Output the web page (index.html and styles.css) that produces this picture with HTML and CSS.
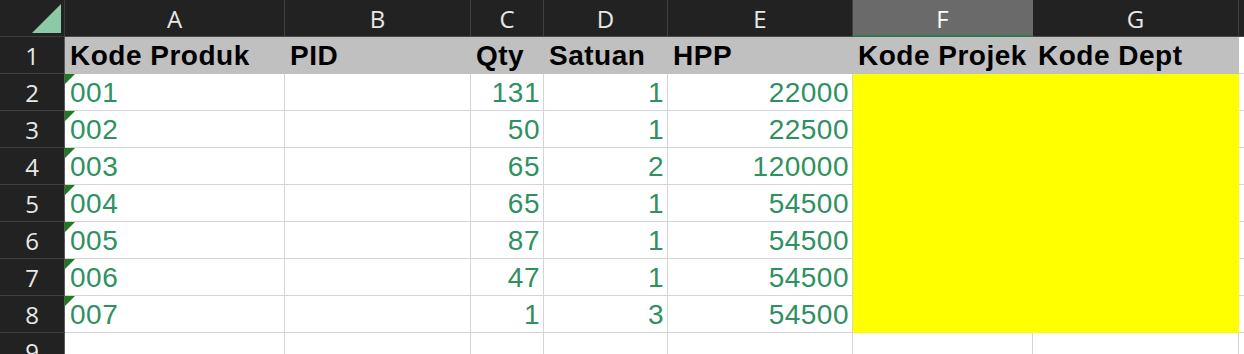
FILE: index.html
```html
<!DOCTYPE html>
<html>
<head>
<meta charset="utf-8">
<link rel="stylesheet" href="styles.css">
</head>
<body>
<div class="sheet">
  <div class="corner"><svg width="64" height="36" viewBox="0 0 64 36"><polygon points="32,33 61,33 61,4" fill="#8cc9a7"/></svg></div>
  <div class="colhead">A</div>
  <div class="colhead">B</div>
  <div class="colhead">C</div>
  <div class="colhead">D</div>
  <div class="colhead">E</div>
  <div class="colhead sel">F</div>
  <div class="colhead">G</div>
  <div class="colhead last"></div>

  <div class="rowhead">1</div>
  <div class="cell title">Kode Produk</div>
  <div class="cell title">PID</div>
  <div class="cell title">Qty</div>
  <div class="cell title">Satuan</div>
  <div class="cell title">HPP</div>
  <div class="cell title">Kode Projek</div>
  <div class="cell title">Kode Dept</div>
  <div class="cell"></div>

  <div class="rowhead">2</div>
  <div class="cell txt">001</div><div class="cell"></div><div class="cell num">131</div><div class="cell num">1</div><div class="cell num">22000</div><div class="cell yel"></div><div class="cell yel"></div><div class="cell"></div>
  <div class="rowhead">3</div>
  <div class="cell txt">002</div><div class="cell"></div><div class="cell num">50</div><div class="cell num">1</div><div class="cell num">22500</div><div class="cell yel"></div><div class="cell yel"></div><div class="cell"></div>
  <div class="rowhead">4</div>
  <div class="cell txt">003</div><div class="cell"></div><div class="cell num">65</div><div class="cell num">2</div><div class="cell num">120000</div><div class="cell yel"></div><div class="cell yel"></div><div class="cell"></div>
  <div class="rowhead">5</div>
  <div class="cell txt">004</div><div class="cell"></div><div class="cell num">65</div><div class="cell num">1</div><div class="cell num">54500</div><div class="cell yel"></div><div class="cell yel"></div><div class="cell"></div>
  <div class="rowhead">6</div>
  <div class="cell txt">005</div><div class="cell"></div><div class="cell num">87</div><div class="cell num">1</div><div class="cell num">54500</div><div class="cell yel"></div><div class="cell yel"></div><div class="cell"></div>
  <div class="rowhead">7</div>
  <div class="cell txt">006</div><div class="cell"></div><div class="cell num">47</div><div class="cell num">1</div><div class="cell num">54500</div><div class="cell yel"></div><div class="cell yel"></div><div class="cell"></div>
  <div class="rowhead">8</div>
  <div class="cell txt">007</div><div class="cell"></div><div class="cell num">1</div><div class="cell num">3</div><div class="cell num">54500</div><div class="cell yel"></div><div class="cell yel"></div><div class="cell"></div>
  <div class="rowhead">9</div>
  <div class="cell"></div><div class="cell"></div><div class="cell"></div><div class="cell"></div><div class="cell"></div><div class="cell"></div><div class="cell"></div><div class="cell"></div>
</div>
</body>
</html>
```

FILE: styles.css
```css
html, body {
  margin: 0;
  padding: 0;
  background: #ffffff;
  overflow: hidden;
}

.sheet {
  display: grid;
  grid-template-columns: 65px 220px 186px 73px 124px 185px 180px 206px 1fr;
  grid-template-rows: 37px repeat(9, 37px);
  width: 1244px;
  height: 354px;
  overflow: hidden;
}

.sheet > div {
  box-sizing: border-box;
  min-width: 0;
  overflow: hidden;
  white-space: nowrap;
}

.corner {
  background: #222222;
  border-right: 1px solid #3c3c3c;
  border-bottom: 1px solid #3c3c3c;
}
.corner svg { display: block; }

.colhead {
  background: #222222;
  color: #e8e8e8;
  font-family: "Open Sans", "Noto Sans", sans-serif;
  font-size: 24px;
  line-height: 38px;
  text-align: center;
  border-right: 1px solid #3f3f3f;
  border-bottom: 1px solid #4a4a4a;
}
.colhead.sel {
  background: #6a6a6a;
  color: #ffffff;
  border-bottom: 2px solid #2f7a52;
  border-right-color: #6a6a6a;
}
.colhead.last { border-right: none; }

.rowhead {
  background: #222222;
  color: #e8e8e8;
  font-family: "Open Sans", "Noto Sans", sans-serif;
  font-size: 24px;
  line-height: 38px;
  text-align: center;
  border-right: 1px solid #5a5a5a;
  border-bottom: 1px solid #3f3f3f;
}

.cell {
  position: relative;
  background: #ffffff;
  border-right: 1px solid #d4d4d4;
  border-bottom: 1px solid #d4d4d4;
  font-family: "Liberation Sans", Arial, sans-serif;
  font-size: 28px;
  line-height: 37px;
  letter-spacing: 0.5px;
  padding: 0 4px 0 5px;
  color: #2f9161;
}

.title {
  background: #c0c0c0;
  border-color: #c0c0c0;
  color: #000000;
  font-weight: bold;
  padding-left: 5px;
}

.num { text-align: right; padding-right: 3px; }

.txt::before {
  content: "";
  position: absolute;
  left: 0;
  top: 0;
  border-top: 10px solid #1f7a1f;
  border-right: 10px solid transparent;
}

.yel {
  background: #ffff00;
  border-color: #ffff00;
}
```
